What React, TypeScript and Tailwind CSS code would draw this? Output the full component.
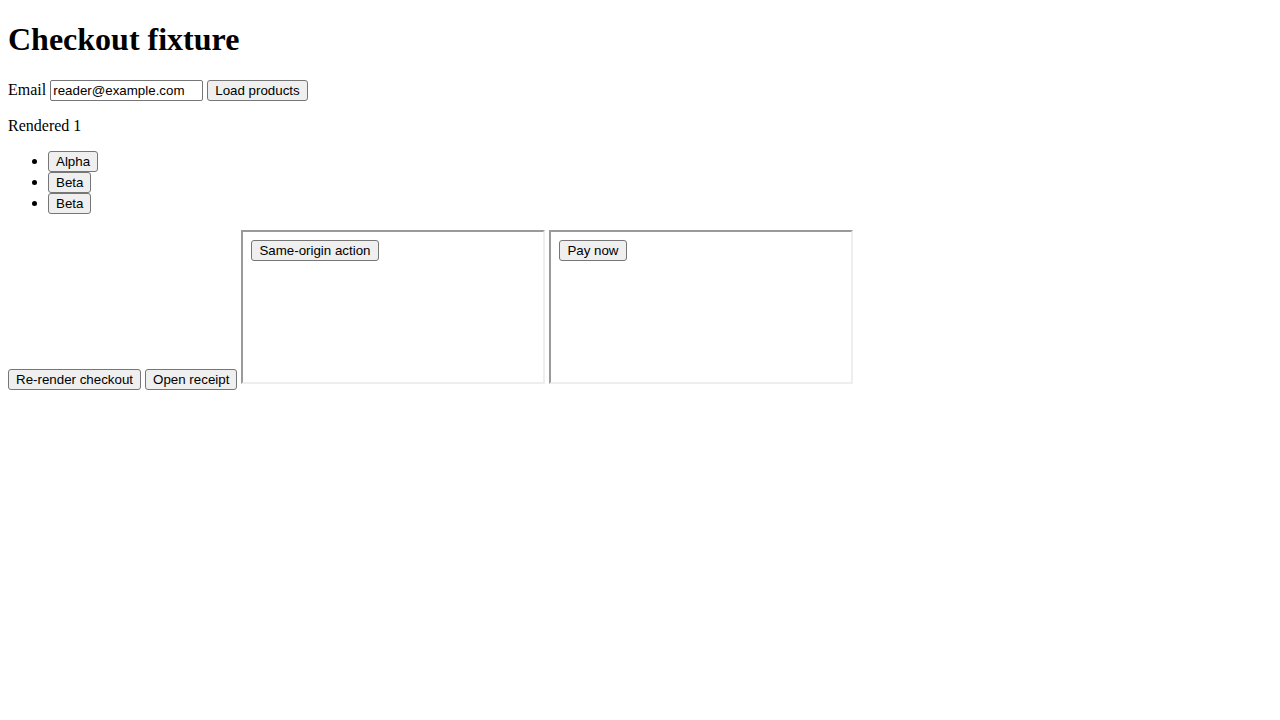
import React from "react";

// plain browser-default look, rebuilt on top of preflight
const btn =
  "inline-block border border-[#767676] rounded-[3px] bg-[#efefef] px-[7px] py-[1px] text-[13.33px] leading-[17px] text-black font-['Liberation_Sans',Arial,sans-serif] align-baseline";

function Frame({ label }: { label: string }) {
  // stands in for an iframe: 300x150 with a 2px inset border
  return (
    <div className="inline-block align-baseline overflow-hidden w-[304px] h-[154px] border-2 border-t-[#9a9a9a] border-l-[#9a9a9a] border-b-[#eeeeee] border-r-[#eeeeee] bg-white">
      <div className="p-2">
        <button className={btn}>{label}</button>
      </div>
    </div>
  );
}

export default function App() {
  const products = ["Alpha", "Beta", "Beta"];

  return (
    <div className="m-2 font-['Liberation_Serif','Times_New_Roman',serif] text-base leading-[normal] text-black bg-white">
      <h1 className="my-[21.44px] text-[32px] font-bold leading-[normal]">Checkout fixture</h1>

      <p className="my-4">
        Email{" "}
        <input
          defaultValue="reader@example.com"
          className="inline-block w-[153px] h-[21px] border border-[#767676] rounded-[2px] px-[2px] text-[13.33px] font-['Liberation_Sans',Arial,sans-serif] align-baseline"
        />{" "}
        <button className={btn}>Load products</button>
      </p>

      <p className="my-4">Rendered 1</p>

      <ul className="my-4 pl-10 list-disc">
        {products.map((name, i) => (
          <li key={i}>
            <button className={btn}>{name}</button>
          </li>
        ))}
      </ul>

      <div>
        <button className={btn}>Re-render checkout</button>{" "}
        <button className={btn}>Open receipt</button>{" "}
        <Frame label="Same-origin action" /> <Frame label="Pay now" />
      </div>
    </div>
  );
}
